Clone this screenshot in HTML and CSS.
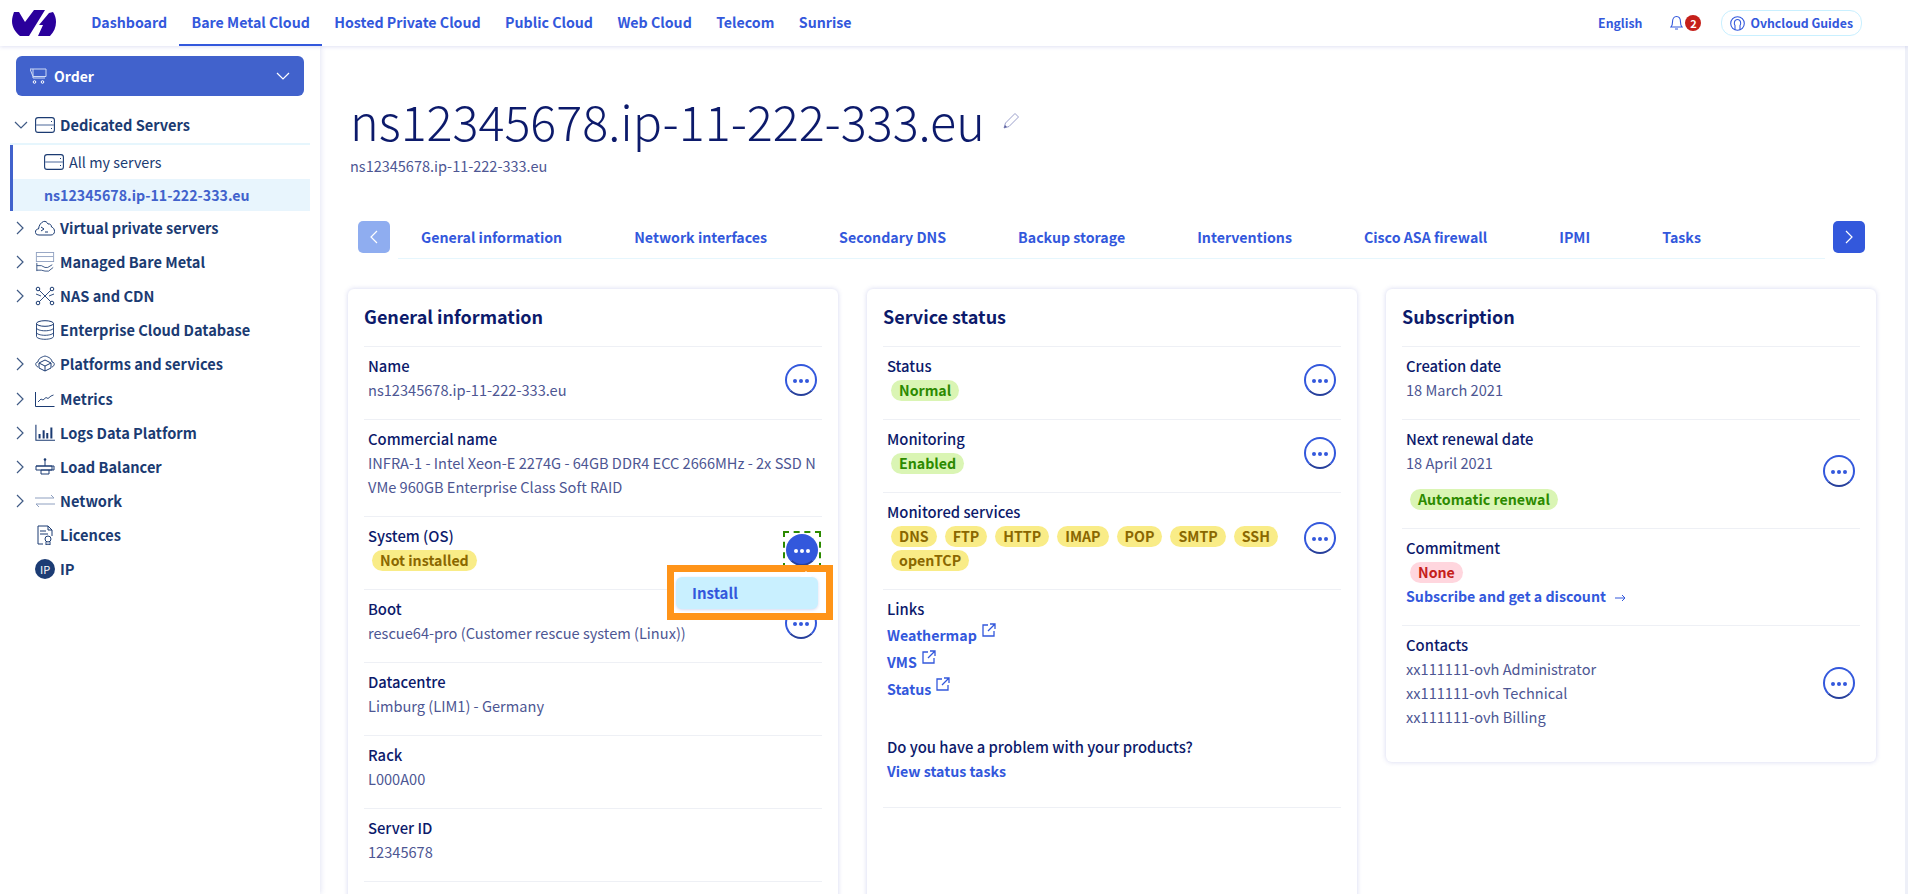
FILE: index.html
```html
<!DOCTYPE html>
<html>
  <head>
    <title>ns12345678.ip-11-222-333.eu</title>
    <meta charset="UTF-8"/>
    <link rel="stylesheet" href="styles.css">
  </head>
  <body>
    <svg class="defs" width="0" height="0">
      <symbol id="chev-right" viewBox="0 0 8 14"><path d="M1 1l6 6-6 6" fill="none" stroke="currentColor" stroke-width="1.2"/></symbol>
      <symbol id="chev-down" viewBox="0 0 14 8"><path d="M1 1l6 6 6-6" fill="none" stroke="currentColor" stroke-width="1.2"/></symbol>
      <symbol id="server" viewBox="0 0 20 16"><rect x=".6" y=".6" width="18.8" height="14.8" rx="2.5" fill="none" stroke="#1b3b72" stroke-width="1.1"/><path d="M1 8h18" stroke="#8fa0c0" stroke-width="1.6"/><path d="M16.5 4v1M16.5 11v1" stroke="#1b3b72" stroke-width="1"/></symbol>
      <symbol id="ext" viewBox="0 0 14 14"><path d="M6 2H1v11h11V8M8 1h5v5M13 1L6 8" fill="none" stroke="currentColor" stroke-width="1.3"/></symbol>
      <symbol id="dots" viewBox="0 0 16 4"><circle cx="2" cy="2" r="2" fill="currentColor"/><circle cx="8" cy="2" r="2" fill="currentColor"/><circle cx="14" cy="2" r="2" fill="currentColor"/></symbol>
    </svg>

    <header class="topbar">
      <svg class="logo" viewBox="0 0 44 26"><path d="M2 2h5l6 10 9-12h11L17 26H8C3 22 0 17 0 11c0-3 1-6 2-9z" fill="#2a009c"/><path d="M37 3L27 15h4l-5 11h12c4-4 6-9 6-14 0-4-1-7-3-10z" fill="#2a009c"/></svg>
      <nav class="topnav">
        <a>Dashboard</a>
        <a class="active">Bare Metal Cloud</a>
        <a>Hosted Private Cloud</a>
        <a>Public Cloud</a>
        <a>Web Cloud</a>
        <a>Telecom</a>
        <a>Sunrise</a>
      </nav>
      <div class="topright">
        <a>English</a>
        <span class="bell">
          <svg width="13" height="16" viewBox="0 0 13 16"><path d="M1 12c1-1 1.500-2 1.500-5 0-3 1.500-5.500 4-5.500s4 2.500 4 5.500c0 3 .5 4 1.500 5zM5 14h3" fill="none" stroke="#3358dc" stroke-width="1.100"/></svg>
          <span class="badge">2</span>
        </span>
        <a class="guides">
          <svg width="15" height="15" viewBox="0 0 15 15"><circle cx="7.500" cy="7.500" r="6.800" fill="none" stroke="#3358dc" stroke-width="1.100"/><path d="M5 14V9.500C3.800 8 4 3.500 7.500 3.500S11.200 8 10 9.500V14" fill="none" stroke="#3358dc" stroke-width="1.100"/></svg>
          Ovhcloud Guides
        </a>
      </div>
    </header>

    <div class="layout">
      <aside class="sidebar">
        <button class="order">
          <svg width="17" height="16" viewBox="0 0 17 16"><path d="M0 1h16v7.500H3zM3 1v9h12" fill="none" stroke="#cfdaf5" stroke-width="1"/><circle cx="4.500" cy="14" r="1.300" fill="none" stroke="#fff"/><circle cx="12.500" cy="14" r="1.300" fill="none" stroke="#fff"/></svg>
          <span>Order</span>
          <svg class="order-chev"><use href="#chev-down"/></svg>
        </button>

        <div class="menu-item open">
          <svg class="chev-d"><use href="#chev-down"/></svg>
          <svg class="ico"><use href="#server"/></svg>
          <span>Dedicated Servers</span>
        </div>
        <div class="submenu">
          <div class="sub-item">
            <svg class="ico"><use href="#server"/></svg>
            <span>All my servers</span>
          </div>
          <div class="sub-item selected">ns12345678.ip-11-222-333.eu</div>
        </div>

        <div class="menu-item">
          <svg class="chev"><use href="#chev-right"/></svg>
          <svg class="ico" viewBox="0 0 20 16"><path d="M4 15C1 15 0 13 .6 11c.4-1.500 1.800-2 2.900-2C4 5 6 2.500 8.500 1.500c2-.5 3.500.5 4.500 2.500 2-.5 3.500 1 3.500 3 2 .5 3 2.500 3 4.500 0 2-1.500 3.500-3.500 3.500z" fill="none" stroke="#1b3b72" stroke-width="1"/><path d="M6 7l3 2-3 2M10 12h3" fill="none" stroke="#1b3b72" stroke-width="1"/></svg>
          <span>Virtual private servers</span>
        </div>
        <div class="menu-item">
          <svg class="chev"><use href="#chev-right"/></svg>
          <svg class="ico tall" viewBox="0 0 20 22"><rect x=".5" y=".5" width="19" height="10" fill="none" stroke="#8fa0c0"/><path d="M1 5h18" stroke="#8fa0c0"/><path d="M1 15h5l4 2h3l5-3M1 20h5l4 1h4l5-4M1 12v9" fill="none" stroke="#1b3b72" stroke-width=".9"/></svg>
          <span>Managed Bare Metal</span>
        </div>
        <div class="menu-item">
          <svg class="chev"><use href="#chev-right"/></svg>
          <svg class="ico tall" viewBox="0 0 20 20"><path d="M3 3l14 14M17 3L3 17M1 8l5 2M19 8l-5 2" stroke="#1b3b72" stroke-width=".9"/><circle cx="3" cy="3" r="1.800" fill="#fff" stroke="#1b3b72"/><circle cx="17" cy="3" r="1.800" fill="#fff" stroke="#1b3b72"/><circle cx="3" cy="17" r="1.800" fill="#fff" stroke="#1b3b72"/><circle cx="17" cy="17" r="1.800" fill="#fff" stroke="#1b3b72"/></svg>
          <span>NAS and CDN</span>
        </div>
        <div class="menu-item">
          <svg class="ico tall with-gap" viewBox="0 0 20 20"><ellipse cx="10" cy="3.500" rx="8.500" ry="2.800" fill="none" stroke="#1b3b72"/><path d="M1.500 3.500v13c0 1.500 4 2.800 8.500 2.800s8.500-1.300 8.500-2.800v-13M1.500 8c0 1.500 4 2.800 8.500 2.800s8.500-1.300 8.500-2.800M1.500 12.500c0 1.500 4 2.800 8.500 2.800s8.500-1.300 8.500-2.800" fill="none" stroke="#1b3b72" stroke-width=".9"/></svg>
          <span>Enterprise Cloud Database</span>
        </div>
        <div class="menu-item">
          <svg class="chev"><use href="#chev-right"/></svg>
          <svg class="ico tall" viewBox="0 0 20 18"><path d="M10 5l6 3v5l-6 3-6-3V8zM4 8l6 3 6-3M10 11v5" fill="none" stroke="#1b3b72"/><path d="M3 12C0 11 0 7 3 7c0-3 3-5 7-6 4 1 7 3 7 6 3 0 3 4 0 5" fill="none" stroke="#1b3b72" stroke-width=".9"/></svg>
          <span>Platforms and services</span>
        </div>
        <div class="menu-item">
          <svg class="chev"><use href="#chev-right"/></svg>
          <svg class="ico tall" viewBox="0 0 20 16"><path d="M.5 1v14.500h19" fill="none" stroke="#1b3b72"/><path d="M3 11l3-3 2 1 3-2.500 2 1 3-2.500 2.500-1" fill="none" stroke="#1b3b72" stroke-width=".9"/></svg>
          <span>Metrics</span>
        </div>
        <div class="menu-item">
          <svg class="chev"><use href="#chev-right"/></svg>
          <svg class="ico tall" viewBox="0 0 22 18"><path d="M1 0v17h21" fill="none" stroke="#1b3b72" stroke-width="1.200"/><path d="M5 15v-5M9.500 15V6M13.500 15V9M18 15V3" stroke="#1b3b72" stroke-width="2.200"/></svg>
          <span>Logs Data Platform</span>
        </div>
        <div class="menu-item">
          <svg class="chev"><use href="#chev-right"/></svg>
          <svg class="ico tall" viewBox="0 0 20 18"><circle cx="10" cy="1.500" r="1.300" fill="#1b3b72"/><path d="M10 2v6M3 8h14v4H1V8zM1 8h18v4H14M6 12h8v4H6z" fill="none" stroke="#1b3b72"/></svg>
          <span>Load Balancer</span>
        </div>
        <div class="menu-item">
          <svg class="chev"><use href="#chev-right"/></svg>
          <svg class="ico tall" viewBox="0 0 20 14"><path d="M0 4h19M16 1l3 3M20 10H1M4 13l-3-3" fill="none" stroke="#8fa0c0"/></svg>
          <span>Network</span>
        </div>
        <div class="menu-item">
          <svg class="ico tall with-gap" viewBox="0 0 18 20"><path d="M7 19H2V1h10l4 4v6M12 1v4h4M4 6h6M4 9h8" fill="none" stroke="#1b3b72" stroke-width="1"/><circle cx="12" cy="14" r="3" fill="none" stroke="#1b3b72"/><path d="M10 17v3l2-1 2 1v-3" fill="none" stroke="#1b3b72"/></svg>
          <span>Licences</span>
        </div>
        <div class="menu-item">
          <span class="ip-ico with-gap">IP</span>
          <span>IP</span>
        </div>
      </aside>

      <main class="content">
        <div class="title-row">
          <h1>ns12345678.ip-11-222-333.eu</h1>
          <svg class="pencil" width="17" height="17" viewBox="0 0 17 17"><path d="M1 16l1.500-5L12 1.500l3.500 3.500L6 14.500z" fill="none" stroke="#9a9fcb"/><path d="M1 16l1-3 2 2z" fill="#5a5f9c"/></svg>
        </div>
        <p class="subtitle">ns12345678.ip-11-222-333.eu</p>

        <div class="tabs">
          <button class="tab-btn off"><svg><use href="#chev-right"/></svg></button>
          <div class="tab-list">
            <a>General information</a>
            <a>Network interfaces</a>
            <a>Secondary DNS</a>
            <a>Backup storage</a>
            <a>Interventions</a>
            <a>Cisco ASA firewall</a>
            <a>IPMI</a>
            <a>Tasks</a>
          </div>
          <button class="tab-btn"><svg><use href="#chev-right"/></svg></button>
        </div>

        <div class="cards">
          <section class="card tall-card">
            <h2>General information</h2>
            <div class="row">
              <div><h3>Name</h3><p>ns12345678.ip-11-222-333.eu</p></div>
              <button class="more"><svg><use href="#dots"/></svg></button>
            </div>
            <div class="row">
              <div><h3>Commercial name</h3><p class="long">INFRA-1 - Intel Xeon-E 2274G - 64GB DDR4 ECC 2666MHz - 2x SSD NVMe 960GB Enterprise Class Soft RAID</p></div>
            </div>
            <div class="row">
              <div><h3>System (OS)</h3><div class="tags"><span class="tag warn">Not installed</span></div></div>
              <span class="focus-ring"><button class="more solid"><svg><use href="#dots"/></svg></button></span>
              <div class="popover">
                <span class="caret"></span>
                <a class="popover-item">Install</a>
              </div>
            </div>
            <div class="row">
              <div><h3>Boot</h3><p>rescue64-pro (Customer rescue system (Linux))</p></div>
              <button class="more"><svg><use href="#dots"/></svg></button>
            </div>
            <div class="row">
              <div><h3>Datacentre</h3><p>Limburg (LIM1) - Germany</p></div>
            </div>
            <div class="row">
              <div><h3>Rack</h3><p>L000A00</p></div>
            </div>
            <div class="row last">
              <div><h3>Server ID</h3><p>12345678</p></div>
            </div>
          </section>

          <section class="card tall-card">
            <h2>Service status</h2>
            <div class="row">
              <div><h3>Status</h3><div class="tags"><span class="tag ok">Normal</span></div></div>
              <button class="more"><svg><use href="#dots"/></svg></button>
            </div>
            <div class="row">
              <div><h3>Monitoring</h3><div class="tags"><span class="tag ok">Enabled</span></div></div>
              <button class="more"><svg><use href="#dots"/></svg></button>
            </div>
            <div class="row">
              <div>
                <h3>Monitored services</h3>
                <div class="tags">
                  <span class="tag warn">DNS</span>
                  <span class="tag warn">FTP</span>
                  <span class="tag warn">HTTP</span>
                  <span class="tag warn">IMAP</span>
                  <span class="tag warn">POP</span>
                  <span class="tag warn">SMTP</span>
                  <span class="tag warn">SSH</span>
                  <span class="tag warn">openTCP</span>
                </div>
              </div>
              <button class="more"><svg><use href="#dots"/></svg></button>
            </div>
            <div class="row">
              <div>
                <h3>Links</h3>
                <a class="ext-link">Weathermap <svg><use href="#ext"/></svg></a>
                <a class="ext-link">VMS <svg><use href="#ext"/></svg></a>
                <a class="ext-link">Status <svg><use href="#ext"/></svg></a>
              </div>
            </div>
            <div class="row problem-row">
              <div><h3>Do you have a problem with your products?</h3><a class="link">View status tasks</a></div>
            </div>
          </section>

          <section class="card">
            <h2>Subscription</h2>
            <div class="row">
              <div><h3>Creation date</h3><p>18 March 2021</p></div>
            </div>
            <div class="row">
              <div>
                <h3>Next renewal date</h3>
                <p>18 April 2021</p>
                <div class="tags spaced"><span class="tag ok">Automatic renewal</span></div>
              </div>
              <button class="more"><svg><use href="#dots"/></svg></button>
            </div>
            <div class="row">
              <div>
                <h3>Commitment</h3>
                <div class="tags"><span class="tag bad">None</span></div>
                <a class="link">Subscribe and get a discount <svg class="arrow" width="12" height="8" viewBox="0 0 12 8"><path d="M0 4h10M7 1l3 3-3 3" fill="none" stroke="currentColor"/></svg></a>
              </div>
            </div>
            <div class="row">
              <div>
                <h3>Contacts</h3>
                <p>xx111111-ovh Administrator</p>
                <p>xx111111-ovh Technical</p>
                <p>xx111111-ovh Billing</p>
              </div>
              <button class="more"><svg><use href="#dots"/></svg></button>
            </div>
          </section>
        </div>
      </main>
    </div>
  </body>
</html>
```

FILE: styles.css
```css
html, body {
  margin: 0;
  height: 100%;
  overflow: hidden;
}
body {
  font-family: 'Noto Sans CJK JP', 'Open Sans', sans-serif;
  font-size: 14.600px;
  line-height: 24px;
  color: #1b3b72;
  background: #fff;
}
a {
  color: #3358dc;
  font-size: 14.200px;
  font-weight: 700;
}
button {
  font: inherit;
  border: 0;
  padding: 0;
}
.defs {
  position: absolute;
}

/* top bar */
.topbar {
  position: relative;
  z-index: 2;
  display: flex;
  align-items: center;
  height: 46px;
  padding: 0 46px 0 12px;
  background: #fff;
  box-shadow: 0 1px 4px rgba(60, 70, 180, 0.16);
}
.logo {
  width: 44px;
  height: 26px;
}
.topnav {
  display: flex;
  align-self: stretch;
  margin-left: 23px;
}
.topnav a {
  display: flex;
  align-items: center;
  padding: 0 12.200px;
  border-bottom: 2px solid transparent;
  white-space: nowrap;
}
.topnav a.active {
  border-bottom-color: #3358dc;
}
.topright {
  display: flex;
  align-items: center;
  margin-left: auto;
}
.topright a {
  font-size: 12.300px;
}
.bell {
  display: flex;
  align-items: center;
  gap: 2px;
  margin-left: 28px;
  margin-right: 20px;
}
.badge {
  width: 16px;
  height: 16px;
  border-radius: 50%;
  background: #c5201a;
  color: #fff;
  font-size: 11px;
  font-weight: 700;
  line-height: 16px;
  text-align: center;
}
.guides {
  display: flex;
  align-items: center;
  gap: 5px;
  height: 24px;
  padding: 0 8px;
  border: 1px solid #c9f0ff;
  border-radius: 12px;
}

.layout {
  display: flex;
  height: calc(100vh - 46px);
}

/* sidebar */
.sidebar {
  flex: 0 0 320px;
  box-sizing: border-box;
  padding: 10px 10px 0;
  box-shadow: 1px 0 5px rgba(60, 70, 180, 0.14);
}
.order {
  display: flex;
  align-items: center;
  gap: 7px;
  box-sizing: border-box;
  width: 288px;
  height: 40px;
  margin: 0 0 12px 6px;
  padding: 0 14px;
  border-radius: 6px;
  background: #4162cc;
  color: #fff;
  font-size: 14px;
  font-weight: 700;
}
.order-chev {
  width: 14px;
  height: 8px;
  margin-left: auto;
}
.menu-item {
  display: flex;
  align-items: center;
  height: 34.100px;
  font-weight: 700;
  white-space: nowrap;
}
.menu-item.open {
  height: 33px;
  padding-bottom: 2px;
  border-bottom: 2px solid #e6f6fd;
}
.chev {
  width: 8px;
  height: 14px;
  margin: 0 11px 0 6px;
  color: #3f5a85;
}
.chev-d {
  width: 14px;
  height: 8px;
  margin: 0 7px 0 4px;
  color: #3f5a85;
}
.ico {
  width: 20px;
  height: 16px;
  margin-right: 5px;
  flex: none;
}
.ico.tall {
  height: 20px;
}
.with-gap {
  margin-left: 25px;
}
.ip-ico {
  width: 20px;
  height: 20px;
  margin-right: 5px;
  border-radius: 50%;
  background: #1c3c74;
  color: #fff;
  font-size: 11px;
  font-weight: 400;
  line-height: 20px;
  text-align: center;
}
.submenu {
  border-left: 3px solid #4162cc;
}
.sub-item {
  display: flex;
  align-items: center;
  height: 33px;
  padding-bottom: 1px;
  padding-left: 31px;
  font-size: 14.400px;
}
.sub-item.selected {
  height: 32px;
  padding-bottom: 0;
  background: #e8f5fd;
  color: #4162cc;
  font-size: 14.200px;
  font-weight: 700;
}

/* main column */
.content {
  flex: 1;
  box-sizing: border-box;
  padding: 0 30px 0 28px;
  overflow: hidden;
  border-right: 3px solid #eef0f8;
}
.title-row {
  display: flex;
  align-items: center;
  gap: 18px;
  margin: 40px 0 2px 2px;
}
h1 {
  margin: 0;
  font-size: 48.500px;
  font-weight: 300;
  line-height: 68px;
  color: #0c1a6b;
  white-space: nowrap;
}
.subtitle {
  margin: 0 0 0 2px;
  height: 44px;
  font-size: 14.500px;
  line-height: 20px;
  color: #4d5693;
}

.tabs {
  display: flex;
  align-items: flex-start;
  gap: 8px;
  margin: 21px 10px 30px 10px;
}
.tab-btn {
  flex: none;
  width: 32px;
  height: 32px;
  border-radius: 5px;
  background: #3358dc;
  color: #fff;
  line-height: 0;
}
.tab-btn.off {
  background: #8fadf0;
}
.tab-btn svg {
  width: 8px;
  height: 14px;
}
.tab-btn.off svg {
  transform: scaleX(-1);
}
.tab-list {
  flex: 1;
  display: flex;
  gap: 72px;
  height: 37px;
  padding-left: 23px;
  border-bottom: 1px solid #e6f6fd;
  line-height: 32px;
  white-space: nowrap;
}

.cards {
  display: grid;
  grid-template-columns: repeat(3, 490px);
  gap: 29px;
  align-items: start;
}
.card {
  position: relative;
  padding: 0 16px 16px;
  border-radius: 6px;
  background: #fff;
  box-shadow: 0 0 5px rgba(60, 70, 180, 0.22);
}
.tall-card {
  min-height: 720px;
}
h2 {
  margin: 0;
  height: 57px;
  font-size: 18px;
  font-weight: 700;
  line-height: 55px;
  color: #0c1a6b;
}
.row {
  position: relative;
  display: flex;
  align-items: center;
  justify-content: space-between;
  gap: 8px;
  padding: 7px 4px 17px;
  border-top: 1px solid #eef0f5;
}
.row.last {
  border-bottom: 1px solid #eef0f5;
}
.row > div:first-child {
  flex: 1;
  min-width: 0;
}
h3 {
  margin: 0;
  font-size: 14.800px;
  font-weight: 500;
  line-height: 24px;
  color: #0c1a6b;
}
p {
  margin: 0;
  color: #4d5693;
}
.long {
  width: 449px;
  word-break: break-all;
}
.link {
  display: block;
}
.arrow {
  margin-left: 6px;
}
.tags {
  display: flex;
  flex-wrap: wrap;
  gap: 3px 8px;
  padding: 2px 0 1px 4px;
}
.tags.spaced {
  margin-top: 12px;
}
.tag {
  height: 21px;
  padding: 0 8px;
  border-radius: 11px;
  font-size: 14.200px;
  font-weight: 700;
  line-height: 21px;
}
.tag.warn {
  background: #f9ec87;
  color: #8a6700;
}
.tag.ok {
  background: #daf5b4;
  color: #2c8a00;
}
.tag.bad {
  background: #ffd6de;
  color: #c5201a;
}
.ext-link {
  display: flex;
  align-items: flex-start;
  gap: 5px;
  height: 27px;
  line-height: 27px;
}
h3 + .ext-link {
  margin-top: 1px;
}
.ext-link svg {
  width: 14px;
  height: 14px;
  margin-top: 1px;
}
.problem-row {
  padding: 15px 4px 24px;
  border-top: 0;
  border-bottom: 1px solid #eef0f5;
}

.more {
  flex: none;
  width: 32px;
  height: 32px;
  margin: 4px 1px 0 0;
  border: 2px solid #3358dc;
  border-bottom-color: #27409c;
  border-radius: 50%;
  background: #fff;
  color: #3358dc;
  line-height: 0;
}
.more svg {
  width: 16px;
  height: 4px;
}
.more.solid {
  background: #3358dc;
  color: #fff;
}
.focus-ring {
  display: flex;
  margin: 4px -3px 0 0;
  padding: 1px;
  border: 2px dashed #2c8a00;
}
.focus-ring .more {
  margin: 0;
}

/* action menu, sits over the next row */
.popover {
  position: absolute;
  z-index: 3;
  top: 48px;
  right: -11px;
  box-sizing: border-box;
  width: 166px;
  height: 55px;
  padding: 5px 8px 4px 2px;
  border: 7px solid #ff9419;
  background: #fff;
}
.caret {
  position: absolute;
  top: -1px;
  right: 14px;
  border: 6px solid transparent;
  border-top: 0;
  border-bottom-color: #fff;
}
.popover-item {
  display: block;
  height: 32px;
  padding-left: 16px;
  border-radius: 6px;
  background: #c9f0ff;
  font-size: 15px;
  line-height: 32px;
  box-shadow: 0 1px 3px rgba(60, 70, 180, 0.2);
}
```
